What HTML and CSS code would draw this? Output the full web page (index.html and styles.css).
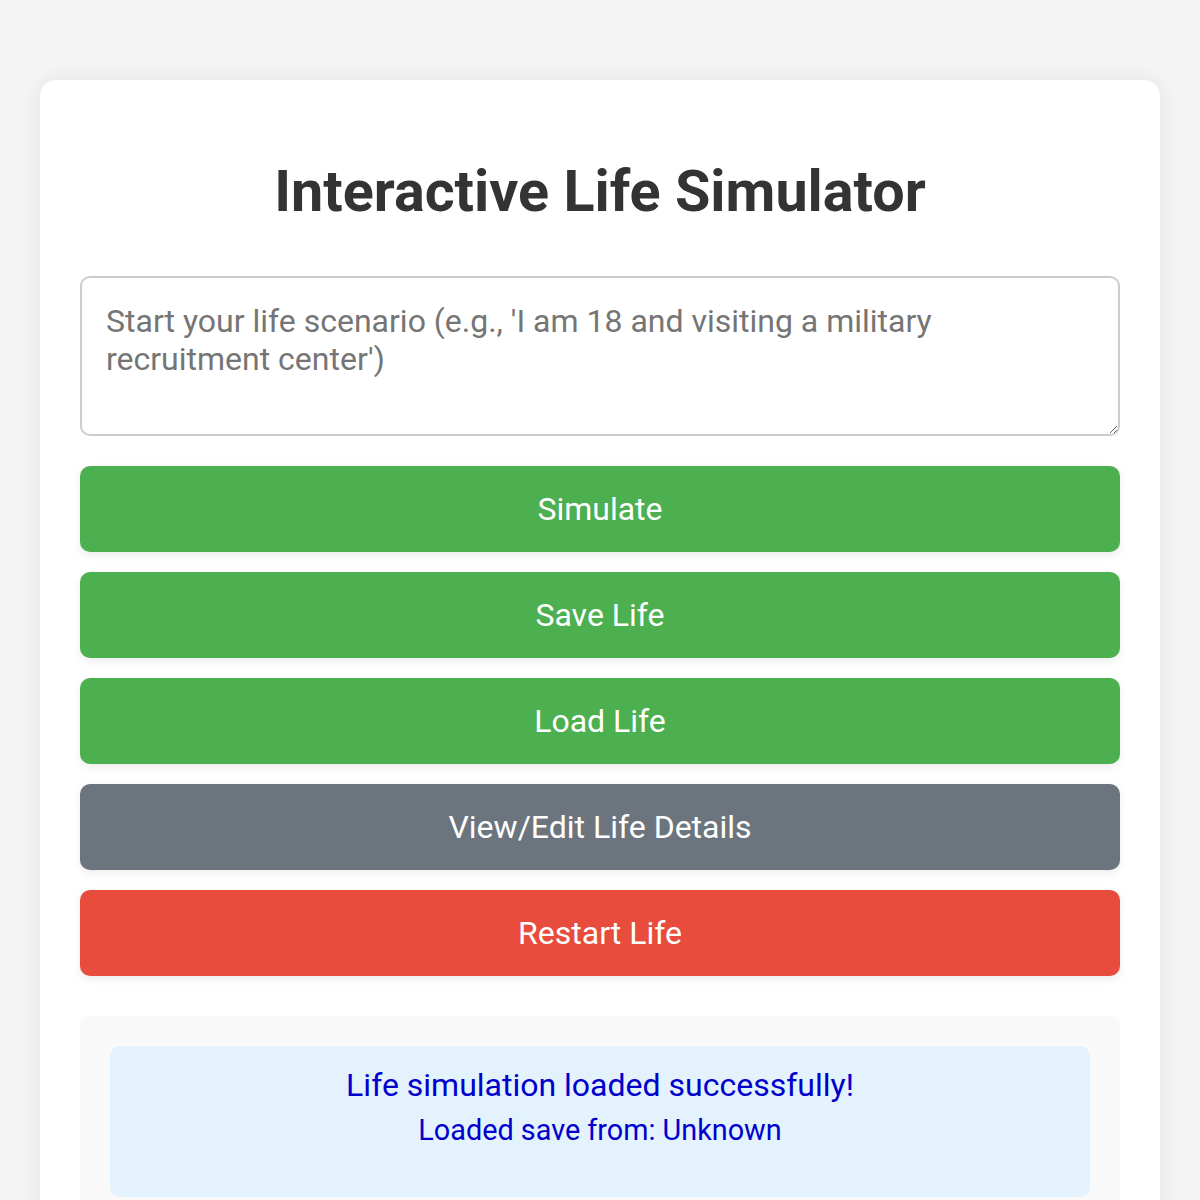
FILE: index.html
```html
<!DOCTYPE html>
<html>
<head>
<meta charset="utf-8">
<link rel="stylesheet" href="styles.css">
</head>
<body>
<div class="container">
  <h1 class="title">Interactive Life Simulator</h1>
  <textarea class="scenario" placeholder="Start your life scenario (e.g., 'I am 18 and visiting a military recruitment center')"></textarea>
  <div class="actions">
    <button class="btn btn-green">Simulate</button>
    <button class="btn btn-green">Save Life</button>
    <button class="btn btn-green">Load Life</button>
    <button class="btn btn-gray">View/Edit Life Details</button>
    <button class="btn btn-red">Restart Life</button>
  </div>
  <div class="output">
    <div class="notice">
      <p class="notice-main">Life simulation loaded successfully!</p>
      <p class="notice-sub">Loaded save from: Unknown</p>
    </div>
  </div>
</div>
</body>
</html>
```
FILE: styles.css
```css
html, body {
  margin: 0;
  padding: 0;
}
body {
  background: #f4f4f4;
  font-family: Roboto, "Noto Sans", sans-serif;
  color: #333;
  padding: 80px 40px 40px;
}
.container {
  background: #fff;
  border-radius: 16px;
  box-shadow: 0 0 20px rgba(0,0,0,0.08);
  padding: 40px 40px 40px;
}
.title {
  margin: 38px 0 50px;
  text-align: center;
  font-size: 57.5px;
  font-weight: 700;
  line-height: 68px;
  color: #333;
}
.scenario {
  display: block;
  box-sizing: border-box;
  width: 100%;
  height: 160px;
  border: 2px solid #ccc;
  border-radius: 10px;
  padding: 24px 24px 22px;
  font-family: Roboto, sans-serif;
  font-size: 32px;
  line-height: normal;
  color: #333;
  resize: vertical;
}
.scenario::placeholder {
  color: #757575;
}
.actions {
  display: flex;
  flex-direction: column;
  gap: 20px;
  margin-top: 30px;
}
.btn {
  height: 86px;
  border: none;
  border-radius: 10px;
  color: #fff;
  font-family: Roboto, sans-serif;
  font-size: 32px;
  box-shadow: 0 3px 8px rgba(0,0,0,0.08);
}
.btn-green { background: #4caf50; }
.btn-gray { background: #6c757d; }
.btn-red { background: #e74c3c; }
.output {
  margin-top: 40px;
  background: #f9f9f9;
  border-radius: 10px;
  padding: 30px;
}
.notice {
  background: #e3f2fd;
  border-radius: 10px;
  padding: 19px 20px 49px;
  text-align: center;
  color: #0000cd;
}
.notice-main {
  margin: 0;
  font-size: 32px;
  line-height: 40px;
}
.notice-sub {
  margin: 7px 0 0;
  font-size: 28.8px;
  line-height: 36px;
}
```
